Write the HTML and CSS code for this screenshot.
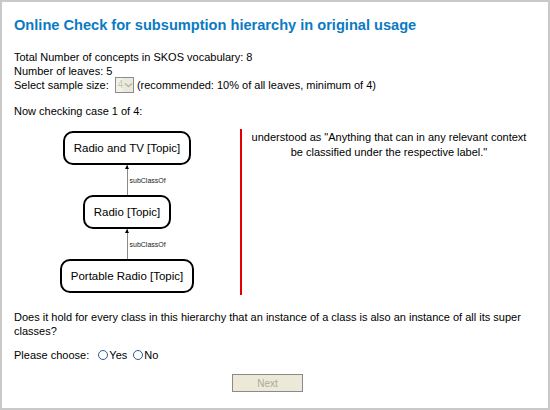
FILE: index.html
```html
<!DOCTYPE html>
<html lang="en">
<head>
  <meta charset="UTF-8">
  <title>Online Check for subsumption hierarchy</title>
  <link rel="stylesheet" href="styles.css">
</head>
<body>
  <div class="frame">
    <h1>Online Check for subsumption hierarchy in original usage</h1>

    <div class="stats">
      <p>Total Number of concepts in SKOS vocabulary: 8</p>
      <p>Number of leaves: 5</p>
      <p>Select sample size:
        <span class="select"><span class="select-value">4</span><span class="select-arrow">
          <svg width="9" height="6" viewBox="0 0 9 6"><path d="M1 1.5 L4.5 4.5 L8 1.5" fill="none" stroke="#b8b8a8" stroke-width="1.6"/></svg>
        </span></span>
        (recommended: 10% of all leaves, minimum of 4)</p>
    </div>

    <p class="case">Now checking case 1 of 4:</p>

    <div class="check">
      <div class="hierarchy">
        <div class="node">Radio and TV [Topic]</div>
        <div class="edge"><span class="edge-label">subClassOf</span></div>
        <div class="node">Radio [Topic]</div>
        <div class="edge"><span class="edge-label">subClassOf</span></div>
        <div class="node">Portable Radio [Topic]</div>
      </div>
      <div class="definition">
        <p>understood as "Anything that can in any relevant context be classified under the respective label."</p>
      </div>
    </div>

    <p class="question">Does it hold for every class in this hierarchy that an instance of a class is also an instance of all its super classes?</p>

    <div class="choice">
      Please choose:&nbsp;
      <label><span class="radio"></span>Yes</label>
      <label><span class="radio"></span>No</label>
    </div>

    <div class="actions">
      <button class="next" disabled>Next</button>
    </div>
  </div>
</body>
</html>
```

FILE: styles.css
```css
/* Global */
html, body {
  margin: 0;
  padding: 0;
  background-color: #fff;
}

body {
  font-family: 'Liberation Sans', Arial, sans-serif;
  font-size: 11px;
  color: #000;
}

p {
  margin: 0;
}

/* Frame */
.frame {
  box-sizing: border-box;
  width: 550px;
  height: 410px;
  border: 2px solid #c9c9c9;
  padding: 0 12px;
}

h1 {
  color: #0a7ac4;
  font-size: 14.6px;
  font-weight: bold;
  margin: 15px 0 17px;
}

/* Stats */
.stats p {
  line-height: 14px;
}

.select {
  display: inline-flex;
  vertical-align: middle;
  box-sizing: border-box;
  width: 19px;
  height: 16px;
  border: 1px solid #8c8c8c;
  background-color: #f3f2ea;
  margin: -1px 0 1px 3px;
}

.select-value {
  flex: 1;
  color: #c4c4b4;
  font-size: 10px;
  line-height: 14px;
  padding-left: 2px;
}

.select-arrow {
  display: flex;
  align-items: center;
  justify-content: center;
  width: 10px;
  background-color: #ebe9dc;
}

.case {
  margin-top: 10px;
  line-height: 14px;
}

/* Check area */
.check {
  display: flex;
  margin-top: 11px;
}

.hierarchy {
  width: 226px;
  display: flex;
  flex-direction: column;
  align-items: center;
  padding-top: 2px;
}

.node {
  box-sizing: border-box;
  height: 34px;
  padding: 0 9px;
  border: 2px solid #000;
  border-radius: 10px;
  font-size: 11.5px;
  line-height: 30px;
  white-space: nowrap;
}

.edge {
  position: relative;
  width: 1px;
  height: 30px;
  background-color: #8a8a8a;
}

.edge::before {
  content: '';
  position: absolute;
  top: 0;
  left: -2px;
  border-left: 2.5px solid transparent;
  border-right: 2.5px solid transparent;
  border-bottom: 4px solid #000;
}

.edge-label {
  position: absolute;
  left: 3px;
  top: 12px;
  font-size: 7px;
  color: #222;
  white-space: nowrap;
}

.definition {
  flex: 1;
  border-left: 2px solid #e30000;
  height: 165px;
  text-align: center;
  padding: 1px 8px 0;
}

.definition p {
  line-height: 15px;
}

/* Question */
.question {
  margin-top: 15px;
  line-height: 14px;
}

.choice {
  margin-top: 10px;
  line-height: 14px;
}

.choice label {
  margin-left: 3px;
}

.radio {
  display: inline-block;
  box-sizing: border-box;
  width: 10px;
  height: 10px;
  border: 1px solid #2c5a9c;
  border-radius: 50%;
  vertical-align: -1px;
  margin-right: 1px;
}

.actions {
  margin-top: 12px;
  padding-left: 218px;
}

.next {
  box-sizing: border-box;
  width: 71px;
  height: 18px;
  border: 1px solid #8a8a8a;
  background-color: #ece9d8;
  color: #aca899;
  font-family: 'Liberation Sans', Arial, sans-serif;
  font-size: 10px;
  padding: 0;
}
```
